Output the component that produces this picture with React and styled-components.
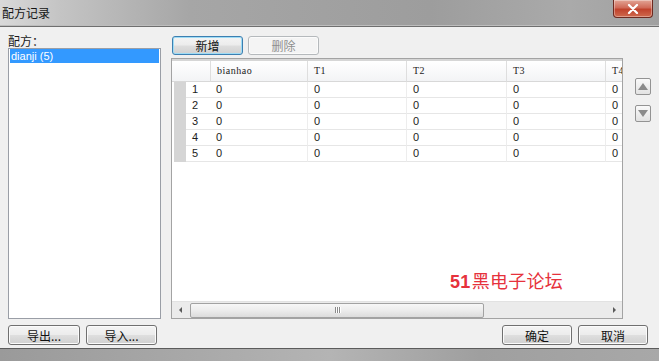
import React from "react";
import styled, { createGlobalStyle } from "styled-components";

const GlobalStyle = createGlobalStyle`
  html, body {
    margin: 0;
    padding: 0;
    background: #f0f0f0;
  }
  body {
    font-family: "Noto Sans CJK SC", "Liberation Sans", sans-serif;
  }
`;

const Window = styled.div`
  width: 659px;
  height: 361px;
  display: flex;
  flex-direction: column;
  overflow: hidden;
  background: #f0f0f0;
`;

const TitleBar = styled.div`
  height: 26px;
  flex: none;
  display: flex;
  justify-content: space-between;
  background: linear-gradient(
    90deg,
    #d9d9d9 0px,
    #c4c4c4 60px,
    #a6a6a6 190px,
    #9d9d9d 430px,
    #aaaaaa 570px,
    #a0a0a0 659px
  );
  border-bottom: 1px solid #6f6f6f;
  box-shadow: inset 0 -1px 0 #bdbdbd;
`;

const Title = styled.div`
  padding: 5px 0 0 2px;
  font-size: 12px;
  line-height: 16px;
  color: #141414;
`;

const CloseButton = styled.div`
  width: 40px;
  height: 18px;
  margin-right: 6px;
  box-sizing: border-box;
  border: 1px solid #6e2a20;
  border-top: none;
  border-radius: 0 0 4px 4px;
  background: linear-gradient(#e2a596 0%, #d06a58 45%, #c0422c 55%, #cf6a4e 100%);
  box-shadow: inset 0 0 0 1px rgba(255, 255, 255, 0.35);
  display: flex;
  align-items: center;
  justify-content: center;
`;

const Body = styled.div`
  flex: 1;
  display: flex;
  flex-direction: column;
  padding: 7px 0 3px 8px;
`;

const Main = styled.div`
  height: 285px;
  display: flex;
`;

const LeftPane = styled.div`
  width: 153px;
  display: flex;
  flex-direction: column;
`;

const Label = styled.div`
  height: 14px;
  font-size: 12px;
  line-height: 13px;
  color: #1a1a1a;
`;

const ListBox = styled.div`
  flex: 1;
  box-sizing: border-box;
  border: 1px solid #9a9ea6;
  background: #ffffff;
  padding: 0 1px;
`;

const ListItem = styled.div`
  height: 14px;
  padding-left: 1px;
  font-family: "Liberation Sans", Arial, sans-serif;
  font-size: 11px;
  line-height: 14px;
  background: ${({ $selected }) => ($selected ? "#3399ff" : "transparent")};
  color: ${({ $selected }) => ($selected ? "#ffffff" : "#000000")};
`;

const RightPane = styled.div`
  margin-left: 10px;
  display: flex;
  flex-direction: column;
  flex: 1;
`;

const Toolbar = styled.div`
  margin: 2px 0 3px 1px;
  display: flex;
  gap: 5px;
`;

const Button = styled.div`
  width: ${({ $w }) => $w}px;
  height: ${({ $h }) => $h || 19}px;
  box-sizing: border-box;
  border-radius: 3px;
  display: flex;
  align-items: center;
  justify-content: center;
  font-size: 12px;
  color: ${({ $disabled }) => ($disabled ? "#8e8e8e" : "#111111")};
  border: 1px solid
    ${({ $disabled, $focused }) =>
      $disabled ? "#b5b9bc" : $focused ? "#3c7fb1" : "#707070"};
  background: ${({ $disabled }) =>
    $disabled
      ? "#f4f4f4"
      : "linear-gradient(#f4f4f4 0%, #ececec 48%, #dedede 52%, #d0d0d0 100%)"};
  box-shadow: inset 0 0 0 1px
    ${({ $focused }) => ($focused ? "#9fdcf5" : "#fbfbfb")};
`;

const GridArea = styled.div`
  flex: 1;
  display: flex;
`;

const Grid = styled.div`
  position: relative;
  width: 452px;
  box-sizing: border-box;
  border: 1px solid #a3a3a3;
  background: #ffffff;
  display: flex;
  flex-direction: column;
  overflow: hidden;
`;

const Row = styled.div`
  flex: none;
  display: grid;
  grid-template-columns: 2px 12px 24px 97px 99px 100px 99px 100px;
  height: ${({ $header }) => ($header ? 21 : 16)}px;
  ${({ $header }) =>
    $header &&
    `
    border-top: 2px solid #d6d6d6;
    background: linear-gradient(#ffffff, #f2f3f5);
  `}
`;

const Strip = styled.div`
  background: ${({ $header }) => ($header ? "transparent" : "#d5d5d5")};
  ${({ $header }) => $header && "border-bottom: 1px solid #d8d8d8;"}
`;

const Cell = styled.div`
  box-sizing: border-box;
  overflow: hidden;
  white-space: nowrap;
  padding-left: 6px;
  border-bottom: 1px solid ${({ $header }) => ($header ? "#d8d8d8" : "#e6e6e6")};
  border-left: ${({ $line, $header }) =>
    $line ? `1px solid ${$header ? "#dedede" : "#ededed"}` : "none"};
  font-family: ${({ $header }) =>
    $header
      ? '"Liberation Serif", "Times New Roman", serif'
      : '"Liberation Sans Narrow", "Liberation Sans", Arial, sans-serif'};
  font-size: ${({ $header }) => ($header ? 10 : 11)}px;
  line-height: ${({ $header }) => ($header ? 19 : 15)}px;
  letter-spacing: ${({ $header }) => ($header ? "0.5px" : "0")};
  color: #1c1c1c;
`;

const Filler = styled.div`
  flex: 1;
`;

const HScroll = styled.div`
  flex: none;
  height: 16px;
  display: flex;
  align-items: center;
  background: #ebebeb;
  border-top: 1px solid #e2e2e2;
`;

const ScrollArrow = styled.div`
  width: 16px;
  height: 16px;
  display: flex;
  align-items: center;
  justify-content: center;
  ${({ $end }) => $end && "margin-left: auto;"}
`;

const Thumb = styled.div`
  width: 294px;
  height: 15px;
  margin-left: 2px;
  box-sizing: border-box;
  border: 1px solid #a2a2a2;
  border-radius: 2px;
  background: linear-gradient(#f7f7f7 0%, #ececec 50%, #dcdcdc 100%);
  display: flex;
  align-items: center;
  justify-content: center;
`;

const Grip = styled.div`
  display: flex;
  gap: 1px;
  span {
    width: 1px;
    height: 6px;
    background: #8a8a8a;
    box-shadow: 1px 0 0 #ffffff;
  }
`;

const Watermark = styled.div`
  position: absolute;
  left: 278px;
  top: 211px;
  font-size: 18px;
  line-height: 20px;
  color: #e6323c;
  letter-spacing: 0.3px;
  b {
    font-family: "Liberation Sans", Arial, sans-serif;
    font-weight: 700;
    margin-right: 1px;
  }
`;

const ArrowColumn = styled.div`
  margin-left: 12px;
  padding-top: 20px;
  display: flex;
  flex-direction: column;
  gap: 10px;
`;

const ArrowButton = styled.div`
  width: 16px;
  height: 17px;
  box-sizing: border-box;
  border: 1px solid #939393;
  border-radius: 2px;
  background: linear-gradient(#f9f9f9, #e2e2e2);
  display: flex;
  align-items: center;
  justify-content: center;
`;

const Footer = styled.div`
  margin-top: 6px;
  display: flex;
  justify-content: space-between;
  padding-right: 11px;
`;

const ButtonGroup = styled.div`
  display: flex;
  gap: 6px;
`;

const BottomFrame = styled.div`
  height: 12px;
  flex: none;
  border-top: 1px solid #5c5c5c;
  background: linear-gradient(
    90deg,
    #9a9a9a 0px,
    #a9a9a9 200px,
    #b4b4b4 330px,
    #9f9f9f 480px,
    #a8a8a8 659px
  );
`;

const Tri = ({ dir, color = "#5a5a5a", w = 4, h = 7 }) => {
  const pts = {
    left: `${w},0 ${w},${h} 0,${h / 2}`,
    right: `0,0 0,${h} ${w},${h / 2}`,
    up: `0,${h} ${w},${h} ${w / 2},0`,
    down: `0,0 ${w},0 ${w / 2},${h}`,
  }[dir];
  return (
    <svg width={w} height={h} viewBox={`0 0 ${w} ${h}`}>
      <polygon points={pts} fill={color} />
    </svg>
  );
};

const columns = ["bianhao", "T1", "T2", "T3", "T4"];
const rows = [1, 2, 3, 4, 5];

export default function App() {
  return (
    <>
      <GlobalStyle />
      <Window>
        <TitleBar>
          <Title>配方记录</Title>
          <CloseButton>
            <svg width="12" height="10" viewBox="0 0 12 10">
              <path
                d="M2 1 L10 9 M10 1 L2 9"
                stroke="#ffffff"
                strokeWidth="2.2"
                strokeLinecap="round"
              />
            </svg>
          </CloseButton>
        </TitleBar>
        <Body>
          <Main>
            <LeftPane>
              <Label>配方：</Label>
              <ListBox>
                <ListItem $selected>dianji (5)</ListItem>
              </ListBox>
            </LeftPane>
            <RightPane>
              <Toolbar>
                <Button $w={71} $focused>
                  新增
                </Button>
                <Button $w={71} $disabled>
                  删除
                </Button>
              </Toolbar>
              <GridArea>
                <Grid>
                  <Row $header>
                    <Strip $header />
                    <Strip $header />
                    <Cell $header />
                    {columns.map((c) => (
                      <Cell $header $line key={c}>
                        {c}
                      </Cell>
                    ))}
                  </Row>
                  {rows.map((r) => (
                    <Row key={r}>
                      <div />
                      <Strip />
                      <Cell>{r}</Cell>
                      {columns.map((c) => (
                        <Cell $line={c !== "bianhao"} key={c}>
                          0
                        </Cell>
                      ))}
                    </Row>
                  ))}
                  <Filler />
                  <HScroll>
                    <ScrollArrow>
                      <Tri dir="left" w={3} h={6} />
                    </ScrollArrow>
                    <Thumb>
                      <Grip>
                        <span />
                        <span />
                        <span />
                      </Grip>
                    </Thumb>
                    <ScrollArrow $end>
                      <Tri dir="right" w={3} h={6} />
                    </ScrollArrow>
                  </HScroll>
                  <Watermark>
                    <b>51</b>黑电子论坛
                  </Watermark>
                </Grid>
                <ArrowColumn>
                  <ArrowButton>
                    <Tri dir="up" color="#8a8a8a" w={10} h={7} />
                  </ArrowButton>
                  <ArrowButton>
                    <Tri dir="down" color="#8a8a8a" w={10} h={7} />
                  </ArrowButton>
                </ArrowColumn>
              </GridArea>
            </RightPane>
          </Main>
          <Footer>
            <ButtonGroup>
              <Button $w={72} $h={20}>
                导出...
              </Button>
              <Button $w={71} $h={20}>
                导入...
              </Button>
            </ButtonGroup>
            <ButtonGroup>
              <Button $w={70} $h={20}>
                确定
              </Button>
              <Button $w={70} $h={20}>
                取消
              </Button>
            </ButtonGroup>
          </Footer>
        </Body>
        <BottomFrame />
      </Window>
    </>
  );
}
